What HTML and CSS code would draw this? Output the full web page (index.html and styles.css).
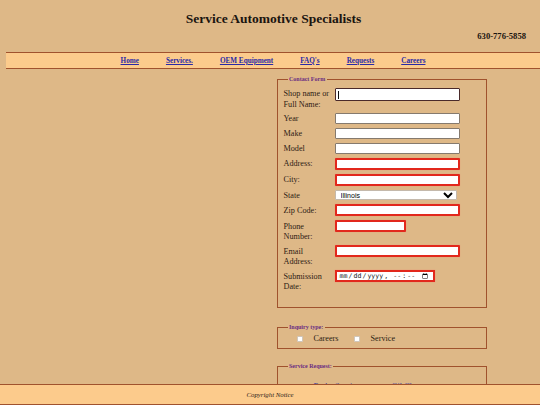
FILE: index.html
```html
<!DOCTYPE html>
<html lang="en">
<head>
<meta charset="utf-8">
<title>Service Automotive Specialists</title>
<link rel="stylesheet" href="styles.css">
</head>
<body>
<header class="site-header">
  <h1 class="title">Service Automotive Specialists</h1>
  <p class="phone">630-776-5858</p>
</header>
<nav class="nav">
  <a href="#">Home</a>
  <a href="#">Services.</a>
  <a href="#">OEM Equipment</a>
  <a href="#">FAQ's</a>
  <a href="#">Requests</a>
  <a href="#">Careers</a>
</nav>
<main class="main">
  <div class="side"></div>
  <form class="form-col">
    <fieldset class="box contact">
      <legend>Contact Form</legend>
      <div class="grid">
        <label class="lbl">Shop name or Full Name:</label>
        <input class="field wide focus" type="text">
        <label class="lbl">Year</label>
        <input class="field wide" type="text">
        <label class="lbl">Make</label>
        <input class="field wide" type="text">
        <label class="lbl">Model</label>
        <input class="field wide" type="text">
        <label class="lbl">Address:</label>
        <input class="field wide req" type="text">
        <label class="lbl">City:</label>
        <input class="field wide req" type="text">
        <label class="lbl">State</label>
        <select class="select"><option>Illinois</option></select>
        <label class="lbl">Zip Code:</label>
        <input class="field wide req" type="text">
        <label class="lbl">Phone Number:</label>
        <input class="field short req" type="text">
        <label class="lbl">Email Address:</label>
        <input class="field wide req" type="text">
        <label class="lbl">Submission Date:</label>
        <input class="date req" type="datetime-local">
      </div>
    </fieldset>
    <fieldset class="box inquiry">
      <legend>Inquiry type:</legend>
      <div class="checks">
        <input class="check" type="checkbox"><span class="check-text">Careers</span>
        <input class="check" type="checkbox"><span class="check-text">Service</span>
      </div>
    </fieldset>
    <fieldset class="box request">
      <legend>Service Request:</legend>
      <div class="checks">
        <input class="check" type="checkbox"><span class="check-text">Brake Service</span>
        <input class="check" type="checkbox"><span class="check-text">Oil Change</span>
      </div>
    </fieldset>
  </form>
</main>
<footer class="footer">Copyright Notice</footer>
</body>
</html>
```
FILE: styles.css
```css
html, body {
  margin: 0;
  padding: 0;
}
body {
  background: #deb887;
  font-family: "Liberation Serif", "Times New Roman", serif;
  color: #2a1d12;
  padding-bottom: 40px;
}
.site-header {
  padding: 11px 0 0 7px;
}
.title {
  margin: 0;
  text-align: center;
  font-size: 13.5px;
  line-height: 16px;
  font-weight: bold;
  color: #1a1410;
}
.phone {
  margin: 4px 0 0 0;
  padding-right: 14px;
  text-align: right;
  font-size: 8.6px;
  line-height: 10px;
  font-weight: bold;
  color: #1a1410;
}
.nav {
  margin: 11px 0 0 6px;
  height: 15px;
  background: #fccb8c;
  border-top: 1.5px solid #a0522d;
  border-bottom: 1.5px solid #a0522d;
  display: flex;
  justify-content: center;
  align-items: center;
  gap: 27px;
}
.nav a {
  font-size: 7.2px;
  font-weight: bold;
  color: #2a2aa8;
  text-decoration: underline;
}
.main {
  display: grid;
  grid-template-columns: 277px 210px;
  margin-top: 6.5px;
}
.form-col {
  margin: 0;
}
.box {
  margin: 0;
  box-sizing: border-box;
  width: 210px;
  min-width: 0;
  border: 1.5px solid #a0522d;
  padding: 5px 6px 15.5px 5.5px;
}
.box legend {
  font-size: 6px;
  line-height: 7px;
  font-weight: bold;
  color: #6a2c82;
  padding: 0 1.5px;
  margin-left: 4px;
}
.grid {
  display: grid;
  grid-template-columns: 47px 1fr;
  column-gap: 4px;
  row-gap: 4px;
  align-items: start;
}
.lbl {
  font-size: 8.2px;
  line-height: 10.5px;
  padding-top: 1.5px;
  margin-bottom: -1.5px;
  color: #2e2014;
}
.field {
  box-sizing: border-box;
  height: 11px;
  padding: 0 2px;
  font-size: 7px;
  background: #fff;
  border: 1px solid #857a6e;
  border-radius: 1px;
  margin: 0;
}
.wide { width: 125px; }
.short { width: 71px; }
.field.req {
  height: 12px;
}
.req {
  border: 2px solid #e2281c;
  box-shadow: 0 0 1px #f08070;
}
.focus {
  height: 13px;
  border: 1.5px solid #4a2a2a;
  box-shadow: inset 0 0 0 0.5px #fff;
  background: linear-gradient(#111, #111) no-repeat 2px 2px / 1px 8px, #fff;
}
.select {
  box-sizing: border-box;
  width: 122px;
  height: 10px;
  font-family: "Liberation Sans", Arial, sans-serif;
  font-size: 7px;
  line-height: 8px;
  padding: 0 0 0 1px;
  margin: 0;
  background: #fff;
  border: 0.5px solid #c4b9ac;
  border-radius: 1px;
  color: #000;
}
.date {
  box-sizing: border-box;
  width: 100px;
  height: 12px;
  font-size: 6.6px;
  padding: 0 2px;
  margin: 0;
  background: #fff;
  color: #222;
}
.date::-webkit-datetime-edit,
.date::-webkit-datetime-edit-fields-wrapper,
.date::-webkit-datetime-edit-text,
.date::-webkit-datetime-edit-month-field,
.date::-webkit-datetime-edit-day-field,
.date::-webkit-datetime-edit-year-field,
.date::-webkit-datetime-edit-hour-field,
.date::-webkit-datetime-edit-minute-field,
.date::-webkit-datetime-edit-ampm-field {
  color: #222;
}
.inquiry {
  margin-top: 16px;
  padding: 3.5px 6px 3px 5.5px;
}
.request {
  margin-top: 14.5px;
  padding: 11.5px 6px 10px 5.5px;
}
.checks {
  display: flex;
  align-items: center;
  height: 10.5px;
  font-size: 8.2px;
  line-height: 10.5px;
}
.check {
  appearance: none;
  -webkit-appearance: none;
  box-sizing: border-box;
  width: 6px;
  height: 6px;
  margin: 0 0 0 13px;
  background: #fff;
  border: 0.5px solid #cfc6bb;
  border-radius: 1px;
}
.check + .check-text {
  margin-left: 11px;
}
.check-text + .check {
  margin-left: 15px;
}
.request .checks { color: #3a3aa0; }
.footer {
  position: fixed;
  left: 0;
  right: 0;
  bottom: 0;
  height: 19.5px;
  background: #fccb8c;
  border-top: 1.5px solid #a0522d;
  border-bottom: 1px solid #a0522d;
  text-align: center;
  font-style: italic;
  font-size: 6.8px;
  line-height: 19.5px;
  color: #2e2218;
}
```
